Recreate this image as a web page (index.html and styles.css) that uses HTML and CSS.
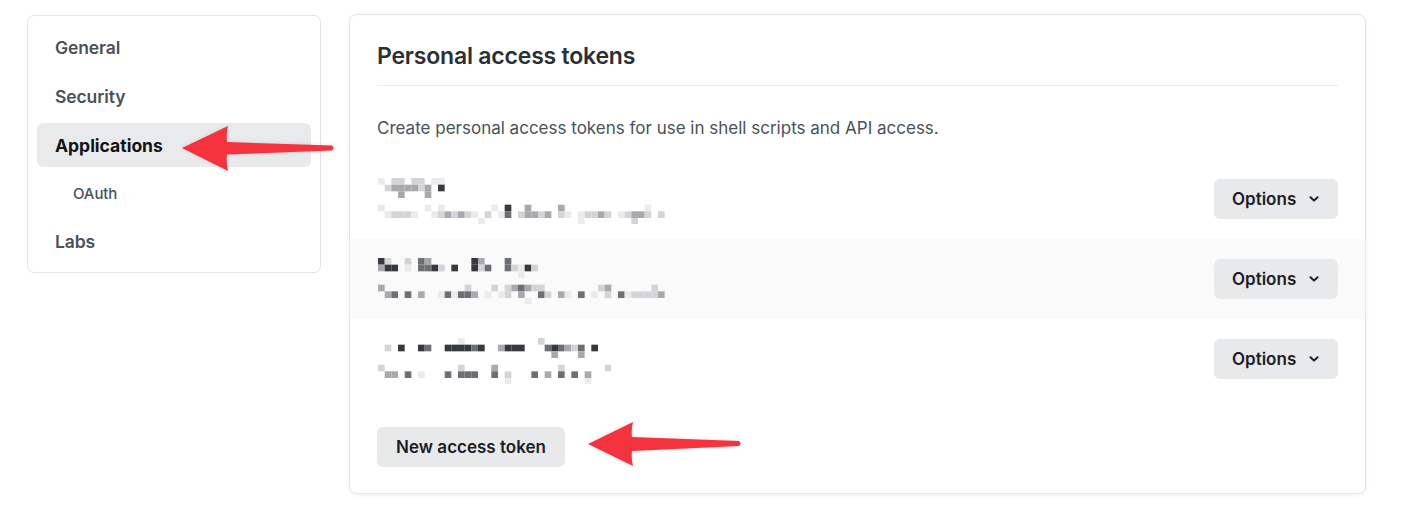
FILE: index.html
```html
<!DOCTYPE html>
<html lang="en">
<head>
<meta charset="utf-8">
<title>Personal access tokens</title>
<link rel="stylesheet" href="styles.css">
</head>
<body>
<div class="page">
  <nav class="sidebar">
    <a class="nav-item">General</a>
    <a class="nav-item">Security</a>
    <a class="nav-item active">Applications</a>
    <a class="nav-item sub">OAuth</a>
    <a class="nav-item">Labs</a>
  </nav>
  <main class="card">
    <h2 class="card-title">Personal access tokens</h2>
    <p class="card-desc">Create personal access tokens for use in shell scripts and API access.</p>
    <ul class="token-list">
      <li class="token-row">
        <svg class="mosaic" viewBox="0 0 45 7" data-token="0"></svg>
        <button class="btn btn-options">Options <svg class="chev" viewBox="0 0 10 6"><path d="M1.5 1.2 5 4.6 8.5 1.2"/></svg></button>
      </li>
      <li class="token-row alt">
        <svg class="mosaic" viewBox="0 0 45 7" data-token="1"></svg>
        <button class="btn btn-options">Options <svg class="chev" viewBox="0 0 10 6"><path d="M1.5 1.2 5 4.6 8.5 1.2"/></svg></button>
      </li>
      <li class="token-row">
        <svg class="mosaic" viewBox="0 0 45 7" data-token="2"></svg>
        <button class="btn btn-options">Options <svg class="chev" viewBox="0 0 10 6"><path d="M1.5 1.2 5 4.6 8.5 1.2"/></svg></button>
      </li>
    </ul>
    <button class="btn btn-new">New access token</button>
  </main>
</div>
<svg class="annotations" viewBox="0 0 1420 507">
  <path class="arrow" d="M182 148 L228 126 Q226 134 227 142 L332 145.5 Q335 148 332 150.5 L227 154.5 Q226 162 228 171 Z"/>
  <path class="arrow" d="M588 444 L633 422 Q631 430 632 437 L739 441 Q742 443.5 739 446 L632 451 Q631 458 633 466 Z"/>
</svg>
<script src="script.js"></script>
</body>
</html>
```
FILE: styles.css
```css
* { box-sizing: border-box; }
html, body { margin: 0; padding: 0; background: #ffffff; }
body {
  font-family: Inter, "Liberation Sans", Arial, sans-serif;
  color: #24292f;
  width: 1420px;
  height: 507px;
  overflow: hidden;
  position: relative;
}
.page {
  display: flex;
  align-items: flex-start;
  gap: 28px;
  padding: 14px 0 0 27px;
}
.sidebar {
  width: 294px;
  margin-top: 1px;
  border: 1px solid #e4e5e7;
  border-radius: 7px;
  padding: 9px 9px 9px;
  display: flex;
  flex-direction: column;
  gap: 5px;
}
.nav-item {
  display: flex;
  align-items: center;
  height: 44px;
  padding-left: 18px;
  padding-top: 1px;
  border-radius: 6px;
  font-size: 17.5px;
  font-weight: 600;
  color: #4a5159;
  letter-spacing: -0.1px;
}
.nav-item.active {
  background: #e9eaec;
  color: #111418;
  font-weight: 700;
  letter-spacing: 0;
}
.nav-item.sub {
  padding-left: 36px;
  font-size: 15px;
  font-weight: 500;
  height: 42px;
  padding-top: 0;
}
.card {
  width: 1017px;
  border: 1px solid #e6e6e6;
  border-radius: 8px;
  box-shadow: 0 1px 4px rgba(0,0,0,0.07);
  padding: 27px 0 26px;
}
.card-title {
  margin: 0 27px 0;
  padding-bottom: 15px;
  border-bottom: 1px solid #ededed;
  font-size: 23px;
  line-height: 28px;
  font-weight: 600;
  color: #2b3036;
  letter-spacing: -0.2px;
}
.card-desc {
  margin: 30px 27px 19px;
  font-size: 17px;
  line-height: 24px;
  color: #4a5159;
}
.token-list {
  list-style: none;
  margin: 0;
  padding: 0;
}
.token-row {
  height: 80px;
  display: flex;
  align-items: center;
  justify-content: space-between;
  padding: 0 27px 0 28px;
}
.token-row.alt { background: #fafafa; }
.mosaic {
  align-self: flex-start;
  margin-top: 18.7px;
  width: 300px;
  height: 46.67px;
}
.btn {
  font-family: inherit;
  border: none;
  border-radius: 6px;
  background: #e8e9eb;
  color: #1c2025;
  font-size: 17px;
  font-weight: 600;
  height: 40px;
  display: inline-flex;
  align-items: center;
}
.btn-options {
  width: 124px;
  padding: 0 0 0 18px;
  gap: 13px;
}
.chev {
  width: 10px;
  height: 6px;
  fill: none;
  stroke: #1c2025;
  stroke-width: 2;
  stroke-linecap: round;
  stroke-linejoin: round;
}
.btn-new {
  margin: 28px 0 0 27px;
  width: 188px;
  justify-content: center;
}
.annotations {
  position: absolute;
  left: 0;
  top: 0;
  width: 1420px;
  height: 507px;
  pointer-events: none;
}
.arrow {
  fill: #f5333f;
  filter: drop-shadow(0 0 2px rgba(0,0,0,0.12));
}
```
FILE: script.js
```js
(function () {
  var shades = { '1': '#ebebed', '2': '#d3d4d7', '3': '#a7a9ad', '4': '#6c6f74', '5': '#36393e' };
  var tokens = [
    [
      "1 22 22 11",
      " 2333323 5",
      "   3   3",
      "",
      "1      1 1       1 5  3    3            1",
      " 12221  1232321 2 14 23323 21 12232 12332 2",
      "               1              1       2"
    ],
    [
      "52  2 43      53   4",
      "355 1 4452 5  524  42152",
      "                     1",
      "",
      "3            2   2 234322        23      2",
      " 34 4 3  141443 1 12 3  42 31 4 1 2 4122223",
      "                      1"
    ],
    [
      "            1           2",
      " 2 5  54  555545  3555   454324 5",
      "                          3   3",
      "",
      "2           2    3         2      2",
      " 33 4 1   4 444  4 2   4 3 4 4 3",
      "                   1           1"
    ]
  ];
  var NS = 'http://www.w3.org/2000/svg';
  document.querySelectorAll('.mosaic').forEach(function (svg) {
    var rows = tokens[+svg.getAttribute('data-token')];
    rows.forEach(function (row, y) {
      for (var x = 0; x < row.length; x++) {
        var c = row[x];
        if (!shades[c]) continue;
        var r = document.createElementNS(NS, 'rect');
        r.setAttribute('x', x);
        r.setAttribute('y', y);
        r.setAttribute('width', 1);
        r.setAttribute('height', 1);
        r.setAttribute('fill', shades[c]);
        svg.appendChild(r);
      }
    });
  });
})();
```
